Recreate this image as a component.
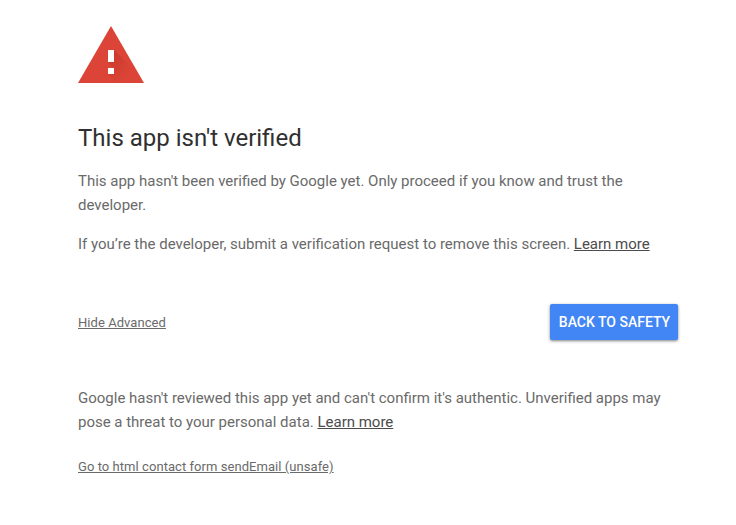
<main>
  <svg class="warning" width="66" height="57" viewBox="0 0 66 57" aria-hidden="true">
    <defs>
      <linearGradient id="shade" gradientUnits="userSpaceOnUse" x1="32" y1="28" x2="51" y2="47">
        <stop offset="0" stop-color="#a52714" stop-opacity=".36" />
        <stop offset="1" stop-color="#a52714" stop-opacity="0" />
      </linearGradient>
    </defs>
    <path d="M33 0 66 57H0Z" fill="#db4437" />
    <path d="M36 24 48.5 36.5 60.3 57H39L30 48 36 48V42L30 36H36Z" fill="url(#shade)" />
    <path d="M30 24h6v12h-6zM30 42h6v6h-6z" fill="#fff" />
  </svg>
  <h1>This app isn't verified</h1>
  <p>This app hasn't been verified by Google yet. Only proceed if you know and trust the developer.</p>
  <p class="request">If you’re the developer, submit a verification request to remove this screen. <a href="#learn">Learn more</a></p>
  <div class="actions">
    <a class="small" href="#advanced">Hide Advanced</a>
    <button>BACK TO SAFETY</button>
  </div>
  <p class="details">Google hasn't reviewed this app yet and can't confirm it's authentic. Unverified apps may pose a threat to your personal data. <a href="#data">Learn more</a></p>
  <a class="small proceed" href="#proceed">Go to html contact form sendEmail (unsafe)</a>
</main>

<style>
  :global(body) { background: #fff; }
  main {
    box-sizing: border-box;
    width: 678px;
    height: 525px;
    padding: 26px 0 0 78px;
    font-family: Roboto, sans-serif;
    color: #6a6a6a;
  }
  .warning { display: block; }
  h1 { margin: 39px 0 0; font-size: 24px; line-height: 32px; font-weight: 400; color: #303030; }
  p { margin: 15px 0 0; font-size: 15px; line-height: 24px; word-spacing: -.04px; }
  p a { color: #4c4c4c; }
  .actions { display: flex; justify-content: space-between; align-items: center; margin-top: 48px; height: 36px; }
  .small { font-size: 13px; line-height: 20px; letter-spacing: .055px; color: #6a6a6a; }
  .actions .small { padding-top: 2px; }
  button {
    width: 128px; height: 36px; padding: 0 0 0 1px; border: 0; border-radius: 2px;
    background: #4285f4; color: #fff; font: 500 14px/36px Roboto, sans-serif;
    box-shadow: 0 1px 3px rgba(0,0,0,.5);
  }
  .details { margin-top: 46px; }
  .proceed { display: block; margin-top: 23px; }
</style>
